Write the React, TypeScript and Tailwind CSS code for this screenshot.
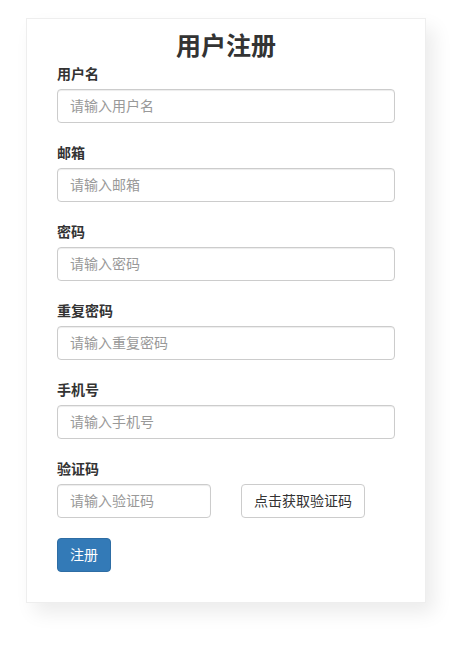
const font = { fontFamily: '"Helvetica Neue", "Liberation Sans", "Noto Sans CJK SC", sans-serif' };

const fields = [
  { label: "用户名", placeholder: "请输入用户名", type: "text" },
  { label: "邮箱", placeholder: "请输入邮箱", type: "email" },
  { label: "密码", placeholder: "请输入密码", type: "password" },
  { label: "重复密码", placeholder: "请输入重复密码", type: "password" },
  { label: "手机号", placeholder: "请输入手机号", type: "text" },
];

const inputCls =
  "h-[34px] rounded border border-[#ccc] bg-white px-3 text-sm text-[#555] placeholder:text-[#999] outline-none shadow-[inset_0_1px_1px_rgba(0,0,0,0.075)]";

export default function App() {
  return (
    <div className="min-h-[648px] bg-white pt-[18px] pl-[26px]" style={font}>
      <div className="w-[400px] border border-[#eee] bg-white px-[30px] pt-[14px] pb-[30px] shadow-[8px_10px_18px_rgba(0,0,0,0.08)]">
        <h2 className="mb-[5px] text-center text-[25px] leading-[26px] font-bold text-[#333]">用户注册</h2>
        <form onSubmit={(e) => e.preventDefault()}>
          {fields.map((f) => (
            <div key={f.label} className="mb-5">
              <label className="mb-[5px] block text-sm leading-5 font-bold text-[#333]">{f.label}</label>
              <input type={f.type} placeholder={f.placeholder} className={`${inputCls} block w-full`} />
            </div>
          ))}
          <div className="mb-5">
            <label className="mb-[5px] block text-sm leading-5 font-bold text-[#333]">验证码</label>
            <div className="flex items-center gap-[30px]">
              <input type="text" placeholder="请输入验证码" className={`${inputCls} w-[154px]`} />
              <button
                type="button"
                className="h-[34px] rounded border border-[#ccc] bg-white px-3 text-sm text-[#333]"
              >
                点击获取验证码
              </button>
            </div>
          </div>
          <button
            type="submit"
            className="h-[34px] rounded border border-[#2e6da4] bg-[#337ab7] px-3 text-sm text-white"
          >
            注册
          </button>
        </form>
      </div>
    </div>
  );
}
